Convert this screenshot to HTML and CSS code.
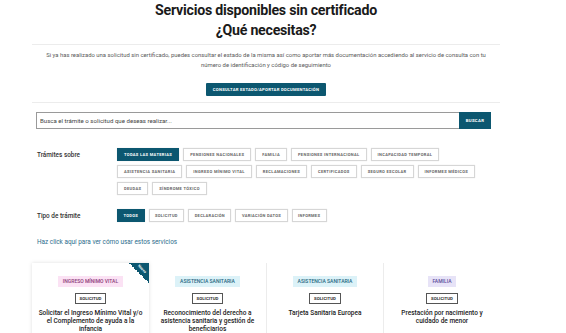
FILE: index.html
```html
<!DOCTYPE html>
<html lang="es">
<head>
    <meta charset="UTF-8">
    <meta name="viewport" content="width=device-width, initial-scale=1.0">
    <title>Servicios disponibles sin certificado</title>
    <link rel="stylesheet" href="styles.css">
</head>
<body>
    <div class="page">
        <div class="heading">
            <h1>Servicios disponibles sin certificado</h1>
            <h1>¿Qué necesitas?</h1>
        </div>

        <div class="intro">
            <p>Si ya has realizado una solicitud sin certificado, puedes consultar el estado de la misma así como aportar más documentación accediendo al servicio de consulta con tu número de identificación y código de seguimiento</p>
            <a href="#" class="btn-primary">CONSULTAR ESTADO/APORTAR DOCUMENTACIÓN</a>
        </div>

        <form class="search">
            <input type="text" placeholder="Busca el trámite o solicitud que deseas realizar...">
            <button type="button">BUSCAR</button>
        </form>

        <div class="filter">
            <div class="filter-label">Trámites sobre</div>
            <div class="chips">
                <span class="chip active">TODAS LAS MATERIAS</span>
                <span class="chip">PENSIONES NACIONALES</span>
                <span class="chip">FAMILIA</span>
                <span class="chip">PENSIONES INTERNACIONAL</span>
                <span class="chip">INCAPACIDAD TEMPORAL</span>
                <span class="chip">ASISTENCIA SANITARIA</span>
                <span class="chip">INGRESO MÍNIMO VITAL</span>
                <span class="chip">RECLAMACIONES</span>
                <span class="chip">CERTIFICADOS</span>
                <span class="chip">SEGURO ESCOLAR</span>
                <span class="chip">INFORMES MÉDICOS</span>
                <span class="chip">DEUDAS</span>
                <span class="chip">SÍNDROME TÓXICO</span>
            </div>
        </div>

        <div class="filter filter-type">
            <div class="filter-label">Tipo de trámite</div>
            <div class="chips">
                <span class="chip active">TODOS</span>
                <span class="chip">SOLICITUD</span>
                <span class="chip">DECLARACIÓN</span>
                <span class="chip">VARIACIÓN DATOS</span>
                <span class="chip">INFORMES</span>
            </div>
        </div>

        <a href="#" class="help-link">Haz click aquí para ver cómo usar estos servicios</a>

        <div class="cards">
            <div class="card featured">
                <div class="ribbon"><span>Nuevo</span></div>
                <span class="tag tag-imv">INGRESO MÍNIMO VITAL</span>
                <span class="kind">SOLICITUD</span>
                <p class="card-title">Solicitar el Ingreso Mínimo Vital y/o el Complemento de ayuda a la infancia</p>
            </div>
            <div class="card">
                <span class="tag tag-health">ASISTENCIA SANITARIA</span>
                <span class="kind">SOLICITUD</span>
                <p class="card-title">Reconocimiento del derecho a asistencia sanitaria y gestión de beneficiarios</p>
            </div>
            <div class="card">
                <span class="tag tag-health">ASISTENCIA SANITARIA</span>
                <span class="kind">SOLICITUD</span>
                <p class="card-title">Tarjeta Sanitaria Europea</p>
            </div>
            <div class="card">
                <span class="tag tag-family">FAMILIA</span>
                <span class="kind">SOLICITUD</span>
                <p class="card-title">Prestación por nacimiento y cuidado de menor</p>
            </div>
        </div>
    </div>
</body>
</html>
```

FILE: styles.css
```css
body {
    font-family: Roboto, "Liberation Sans", Arial, sans-serif;
    background-color: #fff;
    color: #222;
    margin: 0;
    padding: 0;
}

.page {
    width: 468px;
    margin-left: 32px;
}

.heading {
    text-align: center;
    padding-bottom: 4px;
    border-bottom: 1px solid #ececec;
}

.heading h1 {
    font-size: 14.2px;
    font-weight: 700;
    letter-spacing: -0.25px;
    line-height: 20px;
    margin: 0;
    color: #1a1a1a;
}

.intro {
    display: flex;
    flex-direction: column;
    align-items: center;
    text-align: center;
    padding: 5px 0 6px;
    border-bottom: 1px solid #ececec;
}

.intro p {
    font-size: 5.9px;
    line-height: 10px;
    color: #5a5a5a;
    margin: 0 0 13px;
    padding: 0 8px;
}

.btn-primary {
    display: block;
    background-color: #0c5770;
    color: #fff;
    text-decoration: none;
    font-size: 4.2px;
    font-weight: 700;
    letter-spacing: 0.25px;
    line-height: 13px;
    height: 13px;
    padding: 0 7px;
    border-radius: 1px;
}

.search {
    display: flex;
    margin: 9px 9px 0 4px;
    height: 17px;
}

.search input {
    flex: 1;
    border: 1px solid #9a9a9a;
    border-right: none;
    padding: 0 3px;
    font-family: inherit;
    font-size: 6.1px;
    color: #333;
    outline: none;
}

.search input::placeholder {
    color: #444;
}

.search button {
    width: 32px;
    border: none;
    background-color: #0c5770;
    color: #fff;
    font-family: inherit;
    font-size: 4.3px;
    font-weight: 700;
    letter-spacing: 0.3px;
    padding: 0;
}

.filter {
    display: flex;
    margin: 19px 0 0 5px;
}

.filter-type {
    margin-top: 14px;
}

.filter-type .chip {
    padding: 0 5.5px;
    letter-spacing: 0.3px;
}

.filter-label {
    width: 80px;
    flex-shrink: 0;
    font-size: 6.4px;
    font-weight: 500;
    color: #333;
    line-height: 14px;
}

.chips {
    display: flex;
    flex-wrap: wrap;
    gap: 4px;
    width: 370px;
}

.chip {
    height: 13px;
    line-height: 11px;
    box-sizing: border-box;
    border: 1px solid #d6d6d6;
    box-shadow: 0 0 1px rgba(0, 0, 0, 0.12);
    padding: 0 6px;
    font-size: 4px;
    font-weight: 700;
    letter-spacing: 0.35px;
    color: #666;
    background-color: #fff;
}

.chip.active {
    background-color: #0c5770;
    border-color: #0c5770;
    color: #fff;
}

.help-link {
    display: block;
    margin: 14px 0 0 5px;
    font-size: 6.4px;
    line-height: 10px;
    color: #2c6d8c;
    text-decoration: none;
}

.cards {
    display: flex;
    margin-top: 16px;
}

.card {
    position: relative;
    width: 117px;
    min-height: 80px;
    box-sizing: border-box;
    display: flex;
    flex-direction: column;
    align-items: center;
    padding: 13px 6px 0;
    text-align: center;
}

.card + .card + .card {
    border-left: 1px solid #ececec;
}

.card.featured {
    box-shadow: 0 0 4px rgba(0, 0, 0, 0.13);
}

.ribbon {
    position: absolute;
    top: 0;
    right: 0;
    width: 20px;
    height: 20px;
    background: linear-gradient(to bottom left, #0c5770 50%, transparent 50%);
    overflow: hidden;
}

.ribbon span {
    position: absolute;
    top: 4px;
    right: -3px;
    width: 20px;
    transform: rotate(45deg);
    font-size: 3.6px;
    font-weight: 700;
    color: #fff;
    text-align: center;
}

.tag {
    height: 11px;
    line-height: 11px;
    padding: 0 5px;
    font-size: 5px;
    font-weight: 500;
}

.tag-imv {
    background-color: #fbe2f4;
    color: #8b3a79;
}

.tag-health {
    background-color: #dcf2f8;
    color: #1f6680;
}

.tag-family {
    background-color: #e7e3f7;
    color: #5b4b9a;
}

.kind {
    margin-top: 6px;
    height: 11px;
    line-height: 9px;
    box-sizing: border-box;
    border: 1px solid #555;
    padding: 0 4px;
    font-size: 4.4px;
    font-weight: 700;
    color: #333;
}

.card-title {
    margin: 5px 0 0;
    font-size: 6.5px;
    font-weight: 500;
    line-height: 8px;
    color: #222;
}
```
